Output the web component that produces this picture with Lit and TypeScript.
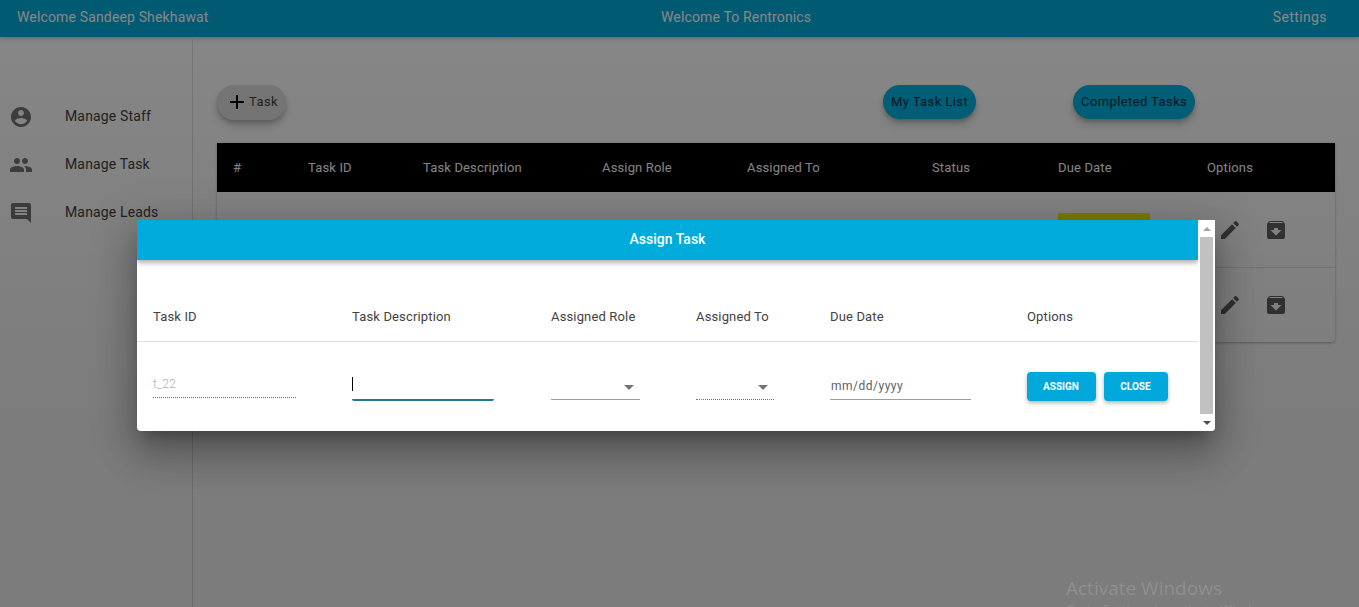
import { LitElement, html, css, svg } from 'lit'
import { customElement } from 'lit/decorators.js'

const icons = {
  staff: svg`<path d="M12 2C6.48 2 2 6.48 2 12s4.48 10 10 10 10-4.48 10-10S17.52 2 12 2zm0 3c1.66 0 3 1.34 3 3s-1.34 3-3 3-3-1.34-3-3 1.34-3 3-3zm0 14.2c-2.5 0-4.71-1.28-6-3.22.03-1.99 4-3.08 6-3.08 1.99 0 5.97 1.09 6 3.08-1.29 1.94-3.5 3.22-6 3.22z"></path>`,
  people: svg`<path d="M16 11c1.66 0 2.99-1.34 2.99-3S17.66 5 16 5c-1.66 0-3 1.34-3 3s1.34 3 3 3zm-8 0c1.66 0 2.99-1.34 2.99-3S9.66 5 8 5C6.34 5 5 6.34 5 8s1.34 3 3 3zm0 2c-2.33 0-7 1.17-7 3.5V19h14v-2.5c0-2.33-4.67-3.5-7-3.5zm8 0c-.29 0-.62.02-.97.05 1.16.84 1.97 1.97 1.97 3.45V19h6v-2.5c0-2.33-4.67-3.5-7-3.5z"></path>`,
  comment: svg`<path d="M21.99 4c0-1.1-.89-2-1.99-2H4c-1.1 0-2 .9-2 2v12c0 1.1.9 2 2 2h14l4 4-.01-18zM18 14H6v-2h12v2zm0-3H6V9h12v2zm0-3H6V6h12v2z"></path>`,
  add: svg`<path d="M19 13h-6v6h-2v-6H5v-2h6V5h2v6h6v2z"></path>`,
  edit: svg`<path d="M3 17.25V21h3.75L17.81 9.94l-3.75-3.75L3 17.25zM20.71 7.04c.39-.39.39-1.02 0-1.41l-2.34-2.34c-.39-.39-1.02-.39-1.41 0l-1.83 1.83 3.75 3.75 1.83-1.83z"></path>`,
  archive: svg`<path d="M20.54 5.23l-1.39-1.68C18.88 3.21 18.47 3 18 3H6c-.47 0-.88.21-1.16.55L3.46 5.23C3.17 5.57 3 6.02 3 6.5V19c0 1.1.9 2 2 2h14c1.1 0 2-.9 2-2V6.5c0-.48-.17-.93-.46-1.27zM12 17.5L6.5 12H10v-2h4v2h3.5L12 17.5zM5.12 5l.81-1h12l.94 1H5.12z"></path>`,
}

const icon = (body: unknown) => html`<svg class="icon" viewBox="0 0 24 24">${body}</svg>`

const navItems = [
  { label: 'Manage Staff', icon: icons.staff },
  { label: 'Manage Task', icon: icons.people },
  { label: 'Manage Leads', icon: icons.comment },
]

const tableCols = ['#', 'Task ID', 'Task Description', 'Assign Role', 'Assigned To', 'Status', 'Due Date', 'Options']

@customElement('app-root')
export class AppRoot extends LitElement {
  static styles = css`
    :host {
      display: block;
      position: relative;
      height: 100vh;
      overflow: hidden;
      background: #fff;
      font-family: Roboto, "Liberation Sans", sans-serif;
      font-size: 13px;
      letter-spacing: 0.15px;
      color: #212121;
    }

    .icon {
      display: block;
      flex: none;
      width: 24px;
      height: 24px;
      fill: currentColor;
    }

    .topbar {
      height: 37px;
      padding: 0 32px 3px 17px;
      box-sizing: border-box;
      display: grid;
      grid-template-columns: 644px 1fr auto;
      align-items: center;
      background: #00aad8;
      color: #fff;
      font-size: 14px;
      box-shadow: 0 2px 4px rgba(0, 0, 0, 0.2);
    }
    .settings { letter-spacing: 0.4px; }

    .layout {
      display: flex;
      height: 570px;
    }

    .sidebar {
      width: 193px;
      box-sizing: border-box;
      padding-top: 56px;
      border-right: 1px solid #dcdcdc;
      flex: none;
    }
    .nav-item {
      display: flex;
      align-items: center;
      height: 48px;
      padding-left: 9px;
      font-size: 14px;
      color: #424242;
    }
    .nav-item .icon { color: #757575; }
    .nav-item span { margin-left: 32px; margin-top: -2px; }

    .main {
      flex: 1;
      padding: 48px 24px 0;
    }

    .actions {
      display: flex;
      height: 58px;
      align-items: flex-start;
    }
    .pill {
      height: 34px;
      border-radius: 17px;
      display: flex;
      align-items: center;
      box-sizing: border-box;
      background: #00b4e4;
      color: #0a2c3c;
      padding: 0 8px 2px;
      letter-spacing: 0.4px;
      box-shadow: 0 3px 5px -1px rgba(0, 0, 0, 0.25), 0 6px 10px rgba(0, 0, 0, 0.14);
    }
    .pill.add {
      width: 69px;
      height: 35px;
      background: #e0e0e0;
      color: #424242;
      padding: 0 0 3px 8px;
    }
    .pill.add .icon { margin-top: 2px; color: #000; }
    .pill.list { margin-left: 597px; }
    .pill.done { margin-left: 97px; }

    .table {
      background: #fff;
      box-shadow: 0 1px 3px rgba(0, 0, 0, 0.3);
      border-radius: 0 0 4px 4px;
    }
    .thead, .row {
      display: grid;
      grid-template-columns: 75px 115px 179px 145px 185px 126px 149px 1fr;
    }
    .thead {
      height: 49px;
      align-items: center;
      background: #000;
      color: #fff;
    }
    .thead div { padding-left: 16px; }
    .row { height: 75px; }
    .row + .row { box-shadow: inset 0 1px #e0e0e0; }
    .due { grid-column: 7; padding: 21px 0 0 16px; }
    .due div { width: 92px; height: 28px; background: #f0f000; }
    .opts {
      grid-column: 8;
      display: flex;
      gap: 22px;
      padding: 26px 0 0 27px;
      color: #616161;
    }

    .scrim {
      position: absolute;
      inset: 0;
      background: linear-gradient(rgba(0, 0, 0, 0.47), rgba(0, 0, 0, 0.515) 70%);
    }

    .modal {
      position: absolute;
      left: 137px;
      top: 220px;
      width: 1078px;
      height: 211px;
      display: flex;
      background: #fff;
      border-radius: 0 0 4px 4px;
      box-shadow: 0 11px 15px -7px rgba(0, 0, 0, 0.3), 0 24px 38px 3px rgba(0, 0, 0, 0.2), 0 9px 46px 8px rgba(0, 0, 0, 0.14);
      overflow: hidden;
    }
    .modal-body { width: 1061px; flex: none; }
    .modal-head {
      height: 40px;
      padding-bottom: 2px;
      box-sizing: border-box;
      display: flex;
      align-items: center;
      justify-content: center;
      background: #00abdc;
      color: #fff;
      font-size: 14px;
      font-weight: 500;
      letter-spacing: 0;
      box-shadow: 0 3px 5px rgba(0, 0, 0, 0.3);
    }
    .form-labels, .form-row {
      display: grid;
      grid-template-columns: 199px 199px 145px 134px 197px 1fr;
      padding-left: 16px;
    }
    .form-labels {
      height: 82px;
      box-sizing: border-box;
      padding-top: 49px;
      border-bottom: 1px solid #e0e0e0;
      color: #424242;
      line-height: 15px;
    }
    .form-row { padding-top: 30px; }

    .field {
      height: 28px;
      box-sizing: border-box;
      position: relative;
      font-size: 12px;
      line-height: 28px;
      border-bottom: 1px solid #9e9e9e;
    }
    .field.dotted { border-bottom: 1px dotted #757575; }
    .field.id { width: 143px; height: 26px; color: #b0b0b0; font-weight: 300; line-height: 24px; }
    .field.desc { width: 142px; border-bottom: 2px solid #1f7a8c; border-radius: 2px; height: 29px; }
    .field.role { width: 89px; }
    .field.to { width: 78px; }
    .field.date { width: 141px; color: #616161; line-height: 29px; letter-spacing: 0.5px; padding-left: 1px; }
    .caret {
      position: absolute;
      left: 0;
      top: 5px;
      width: 1px;
      height: 14px;
      background: #000;
    }
    .field.role::after, .field.to::after {
      content: '';
      position: absolute;
      right: 6px;
      top: 13px;
      border-left: 5px solid transparent;
      border-right: 5px solid transparent;
      border-top: 5px solid #757575;
    }

    .buttons { display: flex; gap: 8px; }
    .btn {
      height: 29px;
      padding-right: 1px;
      box-sizing: border-box;
      display: flex;
      align-items: center;
      justify-content: center;
      background: #00a8dc;
      color: #fff;
      border-radius: 4px;
      font-size: 10px;
      font-weight: 700;
      letter-spacing: 0;
      box-shadow: 0 2px 4px rgba(0, 0, 0, 0.3);
    }
    .btn.assign { width: 69px; }
    .btn.close { width: 64px; }

    .scrollbar {
      flex: 1;
      display: flex;
      flex-direction: column;
      align-items: center;
      background: #fff;
    }
    .scrollbar .arrow { height: 17px; display: flex; align-items: center; justify-content: center; }
    .arrow i {
      display: block;
      border-left: 4px solid transparent;
      border-right: 4px solid transparent;
    }
    .arrow.up i { border-bottom: 4px solid #a3a3a3; }
    .arrow.down i { border-top: 4px solid #505050; }
    .thumb { flex: 1; width: 100%; padding: 0 2px; box-sizing: border-box; }
    .thumb div { height: 100%; background: #c1c1c1; }

    .watermark {
      position: absolute;
      left: 1066px;
      top: 576px;
      color: rgba(255, 255, 255, 0.16);
      font-family: "Open Sans", sans-serif;
      font-size: 19px;
      letter-spacing: 0;
      line-height: 24px;
      white-space: nowrap;
    }
    .watermark small { display: block; font-size: 13px; line-height: 18px; }
  `

  render() {
    return html`
      <div class="topbar">
        <div>Welcome Sandeep Shekhawat</div>
        <div>Welcome To Rentronics</div>
        <div class="settings">Settings</div>
      </div>
      <div class="layout">
        <nav class="sidebar">
          ${navItems.map(n => html`
            <div class="nav-item">${icon(n.icon)}<span>${n.label}</span></div>
          `)}
        </nav>
        <main class="main">
          <div class="actions">
            <div class="pill add">${icon(icons.add)}Task</div>
            <div class="pill list">My Task List</div>
            <div class="pill done">Completed Tasks</div>
          </div>
          <div class="table">
            <div class="thead">${tableCols.map(c => html`<div>${c}</div>`)}</div>
            ${[0, 1].map(() => html`
              <div class="row">
                <div class="due"><div></div></div>
                <div class="opts">${icon(icons.edit)}${icon(icons.archive)}</div>
              </div>
            `)}
          </div>
        </main>
      </div>

      <div class="scrim"></div>
      <div class="watermark">Activate Windows<small>Go to Settings to activate Windows.</small></div>

      <div class="modal">
        <div class="modal-body">
          <div class="modal-head">Assign Task</div>
          <div class="form-labels">
            <div>Task ID</div>
            <div>Task Description</div>
            <div>Assigned Role</div>
            <div>Assigned To</div>
            <div>Due Date</div>
            <div>Options</div>
          </div>
          <div class="form-row">
            <div class="field id dotted">t_22</div>
            <div class="field desc"><span class="caret"></span></div>
            <div class="field role"></div>
            <div class="field to dotted"></div>
            <div class="field date">mm/dd/yyyy</div>
            <div class="buttons">
              <div class="btn assign">ASSIGN</div>
              <div class="btn close">CLOSE</div>
            </div>
          </div>
        </div>
        <div class="scrollbar">
          <div class="arrow up"><i></i></div>
          <div class="thumb"><div></div></div>
          <div class="arrow down"><i></i></div>
        </div>
      </div>
    `
  }
}

declare global {
  interface HTMLElementTagNameMap {
    'app-root': AppRoot
  }
}
